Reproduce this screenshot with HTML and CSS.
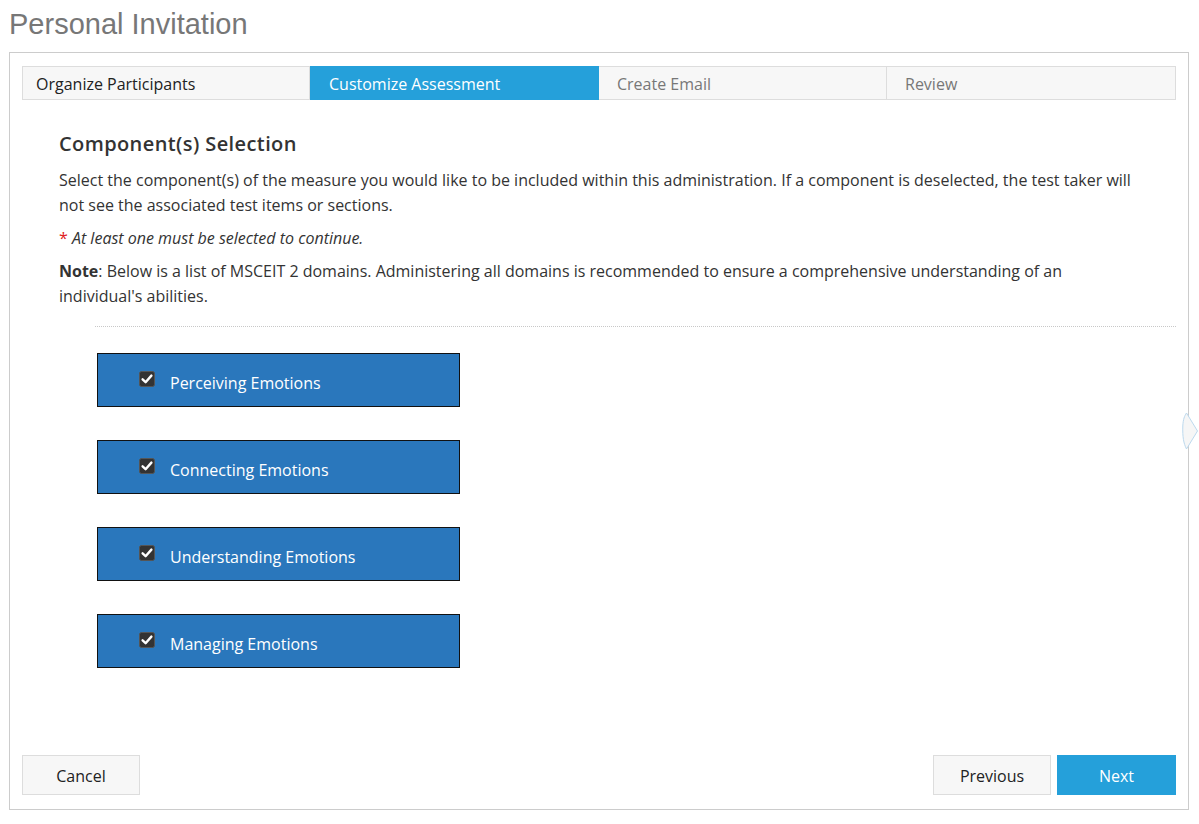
FILE: index.html
```html
<!DOCTYPE html>
<html lang="en">
<head>
<meta charset="utf-8">
<title>Personal Invitation</title>
<link rel="stylesheet" href="styles.css">
</head>
<body>
<h1 class="page-title">Personal Invitation</h1>
<div class="panel">
  <div class="steps">
    <div class="step step-done">Organize Participants</div>
    <div class="step step-active">Customize Assessment</div>
    <div class="step">Create Email</div>
    <div class="step">Review</div>
  </div>
  <div class="content">
    <h2 class="section-title">Component(s) Selection</h2>
    <p class="text">Select the component(s) of the measure you would like to be included within this administration. If a component is deselected, the test taker will not see the associated test items or sections.</p>
    <p class="text required"><span class="star">*</span> At least one must be selected to continue.</p>
    <p class="text"><b>Note</b>: Below is a list of MSCEIT 2 domains. Administering all domains is recommended to ensure a comprehensive understanding of an individual's abilities.</p>
  </div>
  <div class="divider"></div>
  <div class="components">
    <label class="component"><span class="check"><svg viewBox="0 0 16 16" width="16" height="16"><rect x="0.5" y="0.5" width="15" height="15" rx="2" fill="#333" stroke="#555"/><path d="M3.6 8.3 L6.6 11.2 L12.4 4.6" fill="none" stroke="#fff" stroke-width="2.4" stroke-linecap="round" stroke-linejoin="round"/></svg></span>Perceiving Emotions</label>
    <label class="component"><span class="check"><svg viewBox="0 0 16 16" width="16" height="16"><rect x="0.5" y="0.5" width="15" height="15" rx="2" fill="#333" stroke="#555"/><path d="M3.6 8.3 L6.6 11.2 L12.4 4.6" fill="none" stroke="#fff" stroke-width="2.4" stroke-linecap="round" stroke-linejoin="round"/></svg></span>Connecting Emotions</label>
    <label class="component"><span class="check"><svg viewBox="0 0 16 16" width="16" height="16"><rect x="0.5" y="0.5" width="15" height="15" rx="2" fill="#333" stroke="#555"/><path d="M3.6 8.3 L6.6 11.2 L12.4 4.6" fill="none" stroke="#fff" stroke-width="2.4" stroke-linecap="round" stroke-linejoin="round"/></svg></span>Understanding Emotions</label>
    <label class="component"><span class="check"><svg viewBox="0 0 16 16" width="16" height="16"><rect x="0.5" y="0.5" width="15" height="15" rx="2" fill="#333" stroke="#555"/><path d="M3.6 8.3 L6.6 11.2 L12.4 4.6" fill="none" stroke="#fff" stroke-width="2.4" stroke-linecap="round" stroke-linejoin="round"/></svg></span>Managing Emotions</label>
  </div>
  <div class="footer">
    <button class="btn">Cancel</button>
    <div class="footer-right">
      <button class="btn">Previous</button>
      <button class="btn btn-primary">Next</button>
    </div>
  </div>
  <svg class="side-arrow" viewBox="0 0 18 40" width="18" height="40"><path d="M5.5 2 L16.5 20 L5.5 38 C2.5 32 1.5 26 1.8 15 C2.2 8 3.5 5 5.5 2 Z" fill="#f6f6f6" stroke="#bcd9ee" stroke-width="1"/></svg>
</div>
</body>
</html>
```

FILE: styles.css
```css
* { box-sizing: border-box; }

body {
  margin: 0;
  padding: 8px 10px 0 9px;
  font-family: "Open Sans", "Noto Sans", sans-serif;
  color: #333;
  background: #fff;
}

.page-title {
  margin: 0 0 12px 0;
  font-family: "Liberation Sans", Arial, sans-serif;
  font-weight: normal;
  font-size: 29px;
  line-height: 32px;
  color: #777;
}

.panel {
  position: relative;
  height: 758px;
  border: 1px solid #ccc;
  padding: 13px 12px 14px 12px;
  display: flex;
  flex-direction: column;
}

.steps {
  display: grid;
  grid-template-columns: 287px 289px 288px 1fr;
  height: 34px;
  border: 1px solid #ddd;
  background: #f7f7f7;
}

.step {
  font-size: 16px;
  line-height: 32px;
  padding-top: 1px;
  padding-left: 18px;
  color: #777;
  border-right: 1px solid #ddd;
  overflow: hidden;
}

.step:last-child { border-right: none; }
.step-done { color: #222; padding-left: 13px; }
.step-active {
  background: #25a0da;
  color: #fff;
  margin: -1px 0;
  line-height: 34px;
  padding-left: 19px;
  border-right: none;
}

.content {
  padding: 30px 30px 0 37px;
}

.section-title {
  margin: 0 0 10px 0;
  font-size: 20px;
  letter-spacing: 0.4px;
  line-height: 28px;
  font-weight: 600;
  color: #333;
}

.text {
  margin: 0 0 8px 0;
  font-size: 16px;
  line-height: 25px;
  color: #333;
}

.required { font-style: italic; }
.star { color: #e02020; font-style: normal; }

.divider {
  margin: 9px 0 0 73px;
  border-top: 1px dotted #c8c8c8;
}

.components {
  display: flex;
  flex-direction: column;
  gap: 33px;
  padding: 26px 0 0 75px;
}

.component {
  width: 363px;
  height: 54px;
  display: flex;
  align-items: center;
  background: #2a77bc;
  border: 1px solid #111;
  color: #fff;
  font-size: 16px;
  padding-left: 41px;
  padding-top: 5px;
}

.check {
  width: 16px;
  height: 16px;
  margin-right: 15px;
  display: flex;
  margin-top: -7px;
}

.footer {
  margin-top: auto;
  display: flex;
  justify-content: space-between;
  align-items: flex-end;
}

.footer-right {
  display: flex;
  gap: 6px;
}

.btn {
  font-family: "Open Sans", "Noto Sans", sans-serif;
  font-size: 16px;
  height: 40px;
  width: 118px;
  background: #f7f7f7;
  border: 1px solid #ddd;
  color: #222;
  padding: 2px 0 0 0;
}

.btn-primary {
  width: 119px;
  background: #25a0da;
  border-color: #25a0da;
  color: #fff;
}

.side-arrow {
  position: absolute;
  left: 1171px;
  top: 358px;
}
```
